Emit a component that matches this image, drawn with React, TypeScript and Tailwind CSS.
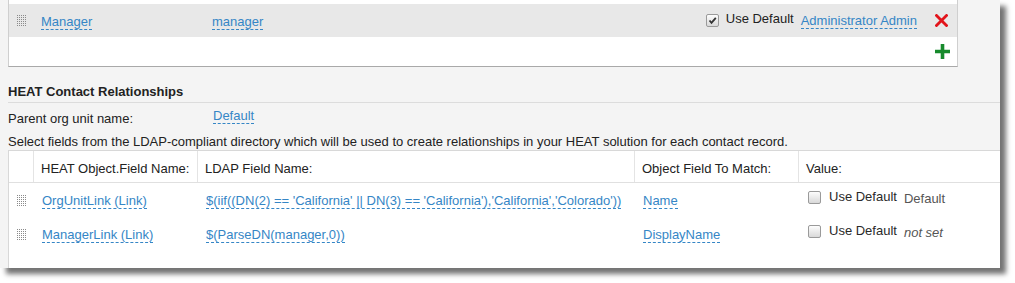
import React from 'react';

// Small dotted grip used to drag rows
function Grip() {
  const dots: React.ReactNode[] = [];
  for (let r = 0; r < 6; r++) {
    for (let c = 0; c < 5; c++) {
      dots.push(<rect key={`${r}-${c}`} x={c * 2} y={r * 2} width="1" height="1" fill="#8a8a8a" />);
    }
  }
  return (
    <svg width="9" height="11" viewBox="0 0 9 11" className="block">
      {dots}
    </svg>
  );
}

function Link({ children }: { children: React.ReactNode }) {
  return (
    <span className="inline-block leading-[15px] text-[#3586c6] border-b border-dashed border-[#3586c6] whitespace-nowrap">
      {children}
    </span>
  );
}

function Checkbox({ checked = false }: { checked?: boolean }) {
  return (
    <span className="relative inline-block w-[13px] h-[13px] shrink-0 rounded-[2px] border border-[#9a9a9a] bg-gradient-to-b from-[#fdfdfd] to-[#d9d9d9]">
      {checked && (
        <svg width="11" height="11" viewBox="0 0 11 11" className="absolute left-0 top-0">
          <path d="M2.5 5.5 L4.5 7.8 L8.8 2.8" stroke="#333" strokeWidth="1.8" fill="none" />
        </svg>
      )}
    </span>
  );
}

function RemoveIcon() {
  return (
    <svg width="13" height="13" viewBox="0 0 13 13" className="block">
      <path d="M1.5 1.5 L11.5 11.5 M11.5 1.5 L1.5 11.5" stroke="#e2141b" strokeWidth="2.8" strokeLinecap="square" />
    </svg>
  );
}

function AddIcon() {
  return (
    <svg width="15" height="15" viewBox="0 0 15 15" className="block">
      <path d="M7.5 0 V15 M0 7.5 H15" stroke="#178a2c" strokeWidth="3.6" />
    </svg>
  );
}

const rows = [
  {
    field: 'OrgUnitLink (Link)',
    ldap: "$(iif((DN(2) == 'California' || DN(3) == 'California'),'California','Colorado'))",
    match: 'Name',
    value: 'Default',
    italic: false,
  },
  {
    field: 'ManagerLink (Link)',
    ldap: '$(ParseDN(manager,0))',
    match: 'DisplayName',
    value: 'not set',
    italic: true,
  },
];

export default function App() {
  return (
    <div className="w-[1015px] h-[283px] bg-white">
      <div className="w-[1000px] h-[268px] overflow-hidden bg-[#f4f4f4] shadow-[6px_6px_5px_rgba(0,0,0,0.55)] font-['Liberation_Sans',Arial,sans-serif] text-[13px] leading-[16px] text-[#222]">
        {/* Attribute mapping box (cut off at the top) */}
        <div className="ml-[8px] w-[950px] bg-white border-l border-r border-[#cfcfcf] border-b border-b-[#a9a9a9]">
          <div className="h-[4px]" />
          <div className="h-[33px] bg-[#e8e8e8] flex items-center pl-[8px] pr-[8px]">
            <div className="w-[24px]">
              <Grip />
            </div>
            <div className="w-[171px] pt-[2px]">
              <Link>Manager</Link>
            </div>
            <div className="flex-1 pt-[2px]">
              <Link>manager</Link>
            </div>
            <div className="flex items-center">
              <Checkbox checked />
              <span className="ml-[7px] -mt-[4px]">Use Default</span>
              <span className="ml-[7px]">
                <Link>Administrator Admin</Link>
              </span>
              <span className="ml-[18px] mr-[1px]">
                <RemoveIcon />
              </span>
            </div>
          </div>
          <div className="h-[29px] flex items-center justify-end pr-[7px]">
            <AddIcon />
          </div>
        </div>

        {/* Contact relationships */}
        <div className="mt-[17px] ml-[8px] h-[19px] border-b border-[#dcdcdc] font-bold">
          HEAT Contact Relationships
        </div>
        <div className="mt-[8px] ml-[8px] flex h-[16px]">
          <span className="w-[205px]">Parent org unit name:</span>
          <span className="-mt-[3px]">
            <Link>Default</Link>
          </span>
        </div>
        <div className="mt-[7px] ml-[8px] whitespace-nowrap">
          Select fields from the LDAP-compliant directory which will be used to create relationships in your HEAT
          solution for each contact record.
        </div>

        <div className="mt-[0px] ml-[8px] w-[1000px] h-[200px] bg-white border-t border-l border-[#d8d8d8]">
          <div className="flex h-[32px] border-b border-[#e0e0e0]">
            <div className="w-[25px] border-r border-[#e4e4e4]" />
            <div className="w-[164px] pl-[7px] pt-[10px] border-r border-[#e4e4e4]">HEAT Object.Field Name:</div>
            <div className="w-[437px] pl-[7px] pt-[10px] border-r border-[#e4e4e4]">LDAP Field Name:</div>
            <div className="w-[164px] pl-[7px] pt-[10px] border-r border-[#e4e4e4]">Object Field To Match:</div>
            <div className="flex-1 pl-[7px] pt-[10px]">Value:</div>
          </div>
          {rows.map((row) => (
            <div key={row.field} className="flex h-[34px]">
              <div className="w-[25px] pl-[8px] pt-[12px]">
                <Grip />
              </div>
              <div className="w-[164px] pl-[8px] pt-[10px]">
                <Link>{row.field}</Link>
              </div>
              <div className="w-[437px] pl-[8px] pt-[10px]">
                <Link>{row.ldap}</Link>
              </div>
              <div className="w-[164px] pl-[8px] pt-[10px]">
                <Link>{row.match}</Link>
              </div>
              <div className="flex-1 pl-[9px] pt-[8px] flex items-start">
                <Checkbox />
                <span className="ml-[8px] -mt-[2px] text-[#2a2a2a]">Use Default</span>
                <span className={`ml-[7px] ${row.italic ? 'italic mt-[0px]' : 'mt-[0px]'} text-[#555]`}>{row.value}</span>
              </div>
            </div>
          ))}
        </div>
      </div>
    </div>
  );
}
